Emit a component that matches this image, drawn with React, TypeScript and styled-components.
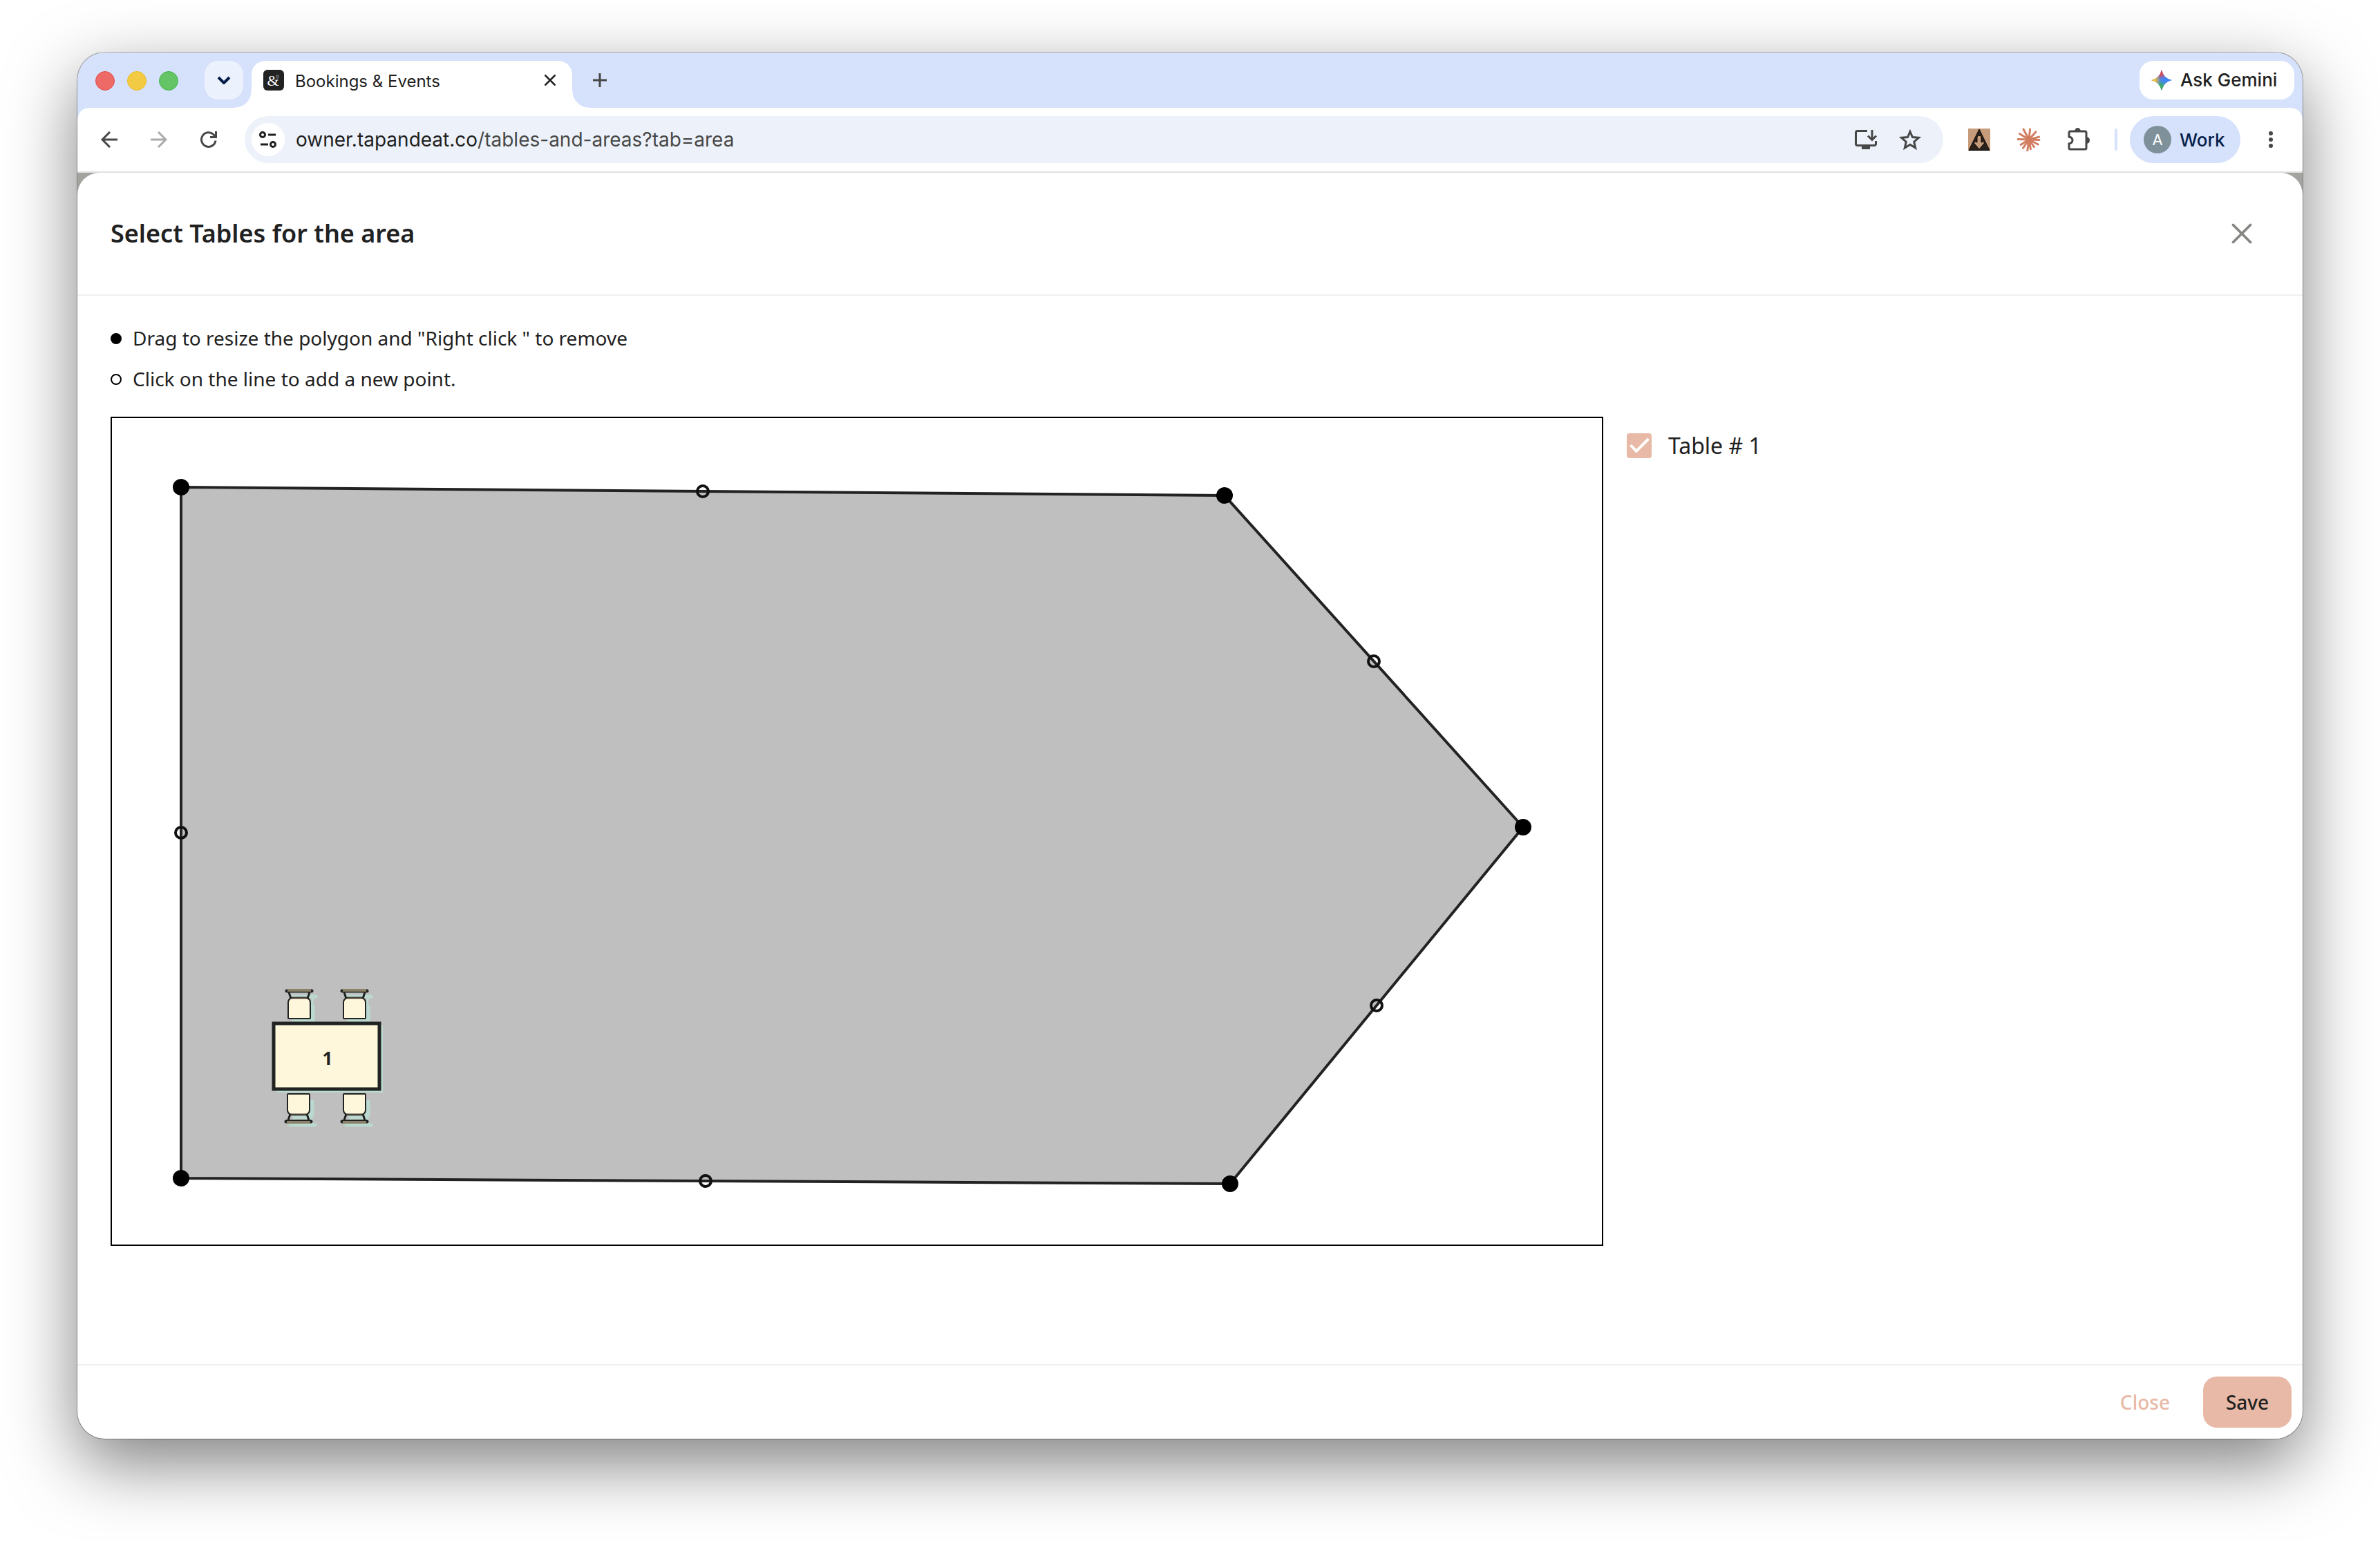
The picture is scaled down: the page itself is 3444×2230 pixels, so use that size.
import React, { useState } from "react";
import styled, { createGlobalStyle } from "styled-components";

const ui = `Inter, "Liberation Sans", sans-serif`;
const body = `"Noto Sans", "Open Sans", sans-serif`;
const peach = "#e8b9a6";

const GlobalStyle = createGlobalStyle`
  *, *::before, *::after { box-sizing: border-box; }
  html, body { margin: 0; background: #fff; }
  button { border: 0; background: none; padding: 0; margin: 0; font: inherit; color: inherit; cursor: pointer; }
  svg { display: block; flex: none; }
`;

const Desktop = styled.main`
  min-height: 100vh;
  display: flex;
  padding: 76px 112px 148px;
  background: #fff;
`;

const Window = styled.div`
  flex: 1;
  min-width: 0;
  display: flex;
  flex-direction: column;
  border-radius: 40px;
  overflow: hidden;
  background: #a3a3a0;
  box-shadow: 0 0 0 1px rgba(0, 0, 0, 0.32), 0 36px 100px rgba(0, 0, 0, 0.5);
`;

const TabStrip = styled.header`
  height: 80px;
  flex: none;
  display: flex;
  align-items: flex-start;
  padding: 12px 12px 0 26px;
  background: #d6e1fb;
  box-shadow: inset 0 1px 0 #eaf0fd;
  font-family: ${ui};
`;

const Lights = styled.div`
  display: flex;
  gap: 18px;
  padding-top: 15px;
`;

const Light = styled.span<{ $fill: string; $edge: string }>`
  width: 28px;
  height: 28px;
  border-radius: 50%;
  background: ${(p) => p.$fill};
  border: 1px solid ${(p) => p.$edge};
`;

const TabSearch = styled.button`
  width: 56px;
  height: 56px;
  margin-left: 38px;
  border-radius: 20px;
  background: #ebf2fd;
  display: grid;
  place-items: center;
`;

const Tab = styled.div`
  position: relative;
  width: 464px;
  height: 68px;
  margin-left: 12px;
  padding: 0 20px 12px 17px;
  display: flex;
  align-items: center;
  background: #fff;
  border-radius: 20px 20px 0 0;
  font-size: 24px;
  color: #1f1f1f;

  &::before,
  &::after {
    content: "";
    position: absolute;
    bottom: 0;
    width: 24px;
    height: 24px;
  }
  &::before {
    right: 100%;
    background: radial-gradient(circle at 0 0, transparent 23px, #fff 24px);
  }
  &::after {
    left: 100%;
    background: radial-gradient(circle at 100% 0, transparent 23px, #fff 24px);
  }
`;

const TabTitle = styled.span`
  flex: 1;
  margin-left: 16px;
  padding-top: 2px;
`;

const IconButton = styled.button<{ $size?: number }>`
  width: ${(p) => p.$size ?? 56}px;
  height: ${(p) => p.$size ?? 56}px;
  flex: none;
  display: grid;
  place-items: center;
`;

const NewTab = styled(IconButton)`
  margin-left: 12px;
`;

const GeminiButton = styled.button`
  width: 224px;
  height: 56px;
  margin-left: auto;
  padding: 0 0 0 17px;
  display: flex;
  align-items: center;
  gap: 12px;
  border-radius: 20px;
  background: #fff;
  color: #1f1f1f;
  font-size: 26px;
  font-weight: 500;
  line-height: 32px;
  white-space: nowrap;
`;

const Toolbar = styled.nav`
  height: 94px;
  flex: none;
  position: relative;
  display: flex;
  align-items: center;
  padding: 0 22px 0 18px;
  background: #fff;
  border-bottom: 2px solid #e0e0e0;
  font-family: ${ui};
  color: #474747;

  &::before,
  &::after {
    content: "";
    position: absolute;
    top: 0;
    width: 16px;
    height: 16px;
  }
  &::before {
    left: 0;
    background: radial-gradient(circle at 100% 100%, transparent 15px, #d6e1fb 16px);
  }
  &::after {
    right: 0;
    background: radial-gradient(circle at 0 100%, transparent 15px, #d6e1fb 16px);
  }
`;

const NavButtons = styled.div`
  display: flex;
  gap: 16px;
`;

const AddressBar = styled.div`
  flex: 1;
  min-width: 0;
  height: 68px;
  margin-left: 24px;
  padding: 0 20px 0 10px;
  display: flex;
  align-items: center;
  gap: 8px;
  border-radius: 34px;
  background: #edf2fa;
`;

const SiteInfo = styled(IconButton)`
  border-radius: 50%;
  background: #fff;
  width: 48px;
  height: 48px;
`;

const Url = styled.a`
  flex: 1;
  margin-left: 8px;
  font-size: 28px;
  line-height: 36px;
  color: #474747;
  text-decoration: none;
  b { font-weight: 400; color: #1f1f1f; }
`;

const Extensions = styled.div`
  display: flex;
  align-items: center;
  gap: 24px;
  margin-left: 28px;
`;

const Divider = styled.span`
  width: 4px;
  height: 32px;
  margin: 0 18px 0 28px;
  border-radius: 2px;
  background: #d6e1fb;
`;

const Profile = styled.button`
  width: 160px;
  height: 68px;
  padding: 0 0 0 20px;
  display: flex;
  align-items: center;
  gap: 12px;
  border-radius: 34px;
  background: #d6e1fb;
  color: #041e49;
  font-size: 26px;
  font-weight: 500;
`;

const Avatar = styled.span`
  width: 40px;
  height: 40px;
  border-radius: 50%;
  display: grid;
  place-items: center;
  background: #7e919b;
  color: #fff;
  font-size: 22px;
  font-weight: 400;
`;

const MenuButton = styled(IconButton)`
  margin-left: 20px;
  width: 48px;
`;

const Dialog = styled.section`
  flex: 1;
  display: flex;
  flex-direction: column;
  border-radius: 32px 32px 0 0;
  background: #fff;
  font-family: ${body};
  color: #212121;
`;

const DialogHeader = styled.header`
  height: 178px;
  display: flex;
  align-items: center;
  justify-content: space-between;
  padding: 0 60px 0 48px;
  border-bottom: 2px solid #f0f0f0;
`;

const Title = styled.h1`
  margin: 0;
  font-size: 36px;
  line-height: 48px;
  font-weight: 600;
`;

const Content = styled.div`
  flex: 1;
  padding: 32px 48px 0;
`;

const Hints = styled.ul`
  margin: 0 0 25px;
  padding: 0;
  list-style: none;
`;

const Hint = styled.li`
  display: flex;
  align-items: center;
  gap: 16px;
  height: 59px;
  font-size: 28px;
  line-height: 41px;
`;

const Dot = styled.span<{ $filled?: boolean }>`
  width: 16px;
  height: 16px;
  border-radius: 50%;
  border: 2px solid #000;
  background: ${(p) => (p.$filled ? "#000" : "transparent")};
`;

const Workspace = styled.div`
  display: grid;
  grid-template-columns: minmax(0, 2160fr) minmax(0, 932fr);
  gap: 32px;
  align-items: start;
`;

const Plan = styled.div`
  border: 2px solid #000;
  svg { width: 100%; height: auto; }
`;

const TableOption = styled.label`
  display: flex;
  align-items: center;
  gap: 24px;
  padding: 18px 2px 0;
  font-size: 32px;
  line-height: 48px;
`;

const Check = styled.input`
  appearance: none;
  width: 36px;
  height: 36px;
  margin: 0;
  border-radius: 4px;
  border: 3px solid ${peach};
  display: grid;
  place-items: center;

  &:checked { background: ${peach}; }
  &:checked::after {
    content: "";
    width: 27px;
    height: 14px;
    border: solid #fff;
    border-width: 0 0 4px 4px;
    transform: translateY(-4px) rotate(-45deg);
  }
`;

const DialogFooter = styled.footer`
  height: 108px;
  display: flex;
  align-items: center;
  justify-content: flex-end;
  gap: 16px;
  padding: 0 16px;
  border-top: 2px solid #f0f0f0;
`;

const ActionButton = styled.button<{ $primary?: boolean }>`
  min-width: 128px;
  height: 74px;
  padding: 0 32px;
  border-radius: 20px;
  font-size: 28px;
  font-weight: 500;
  color: ${(p) => (p.$primary ? "#212121" : peach)};
  background: ${(p) => (p.$primary ? peach : "transparent")};
`;

const corners = [[100, 100], [1610, 112], [2042, 592], [1618, 1108], [100, 1100]];

function Chair({ x, y, flip }: { x: number; y: number; flip?: boolean }) {
  return (
    <g transform={`translate(${x} ${y})${flip ? " scale(1 -1)" : ""}`}>
      <g fill="#bad9cf" stroke="#bad9cf" strokeWidth="3" transform={flip ? "translate(6 -5)" : "translate(6 8)"}>
        <path d="M-18 3H18" strokeWidth="5" strokeLinecap="round" />
        <path d="M-14 5L-12 14M14 5L12 14" />
        <path d="M-15 38V20Q-15 14 -10 13H10Q15 14 15 20V38Z" />
      </g>
      <path d="M-15 5L-12 14M15 5L12 14" stroke="#212322" strokeWidth="3" />
      <path d="M-16 42V20Q-16 14 -10 13H10Q16 14 16 20V42Q16 43 15 43H-15Q-16 43 -16 42Z" fill="#fef7dc" stroke="#212322" strokeWidth="2" />
      <path d="M-11 13H11" stroke="#4a423b" strokeWidth="3" />
      <path d="M-18 3H18" stroke="#212322" strokeWidth="5" strokeLinecap="round" />
      <path d="M-17 2H17" stroke="#8a8168" strokeWidth="4" />
    </g>
  );
}

function FloorPlan() {
  return (
    <svg viewBox="0 0 2156 1196" role="img" aria-label="Area polygon">
      <polygon points={corners.map((c) => c.join(",")).join(" ")} fill="#bfbfbf" stroke="#222" strokeWidth="4" />
      {corners.map(([x, y], i) => {
        const [nx, ny] = corners[(i + 1) % corners.length];
        return <circle key={i} cx={(x + nx) / 2} cy={(y + ny) / 2} r="8" fill="none" stroke="#111" strokeWidth="4" />;
      })}
      {corners.map(([x, y], i) => <circle key={i} cx={x} cy={y} r="12" fill="#000" />)}
      <Chair x={271} y={826} />
      <Chair x={351} y={826} />
      <Chair x={270} y={1021} flip />
      <Chair x={351} y={1021} flip />
      <path d="M239 879H392V976H239Z" fill="#bad9cf" />
      <rect x="234" y="876" width="153" height="95" fill="#fef7dc" stroke="#212322" strokeWidth="5" />
      <text x="312" y="936" textAnchor="middle" fontFamily="Noto Sans, sans-serif" fontSize="26" fontWeight="700" fill="#212121">1</text>
    </svg>
  );
}

const Cross = ({ size, width, color }: { size: number; width: number; color: string }) => (
  <svg width={size} height={size} viewBox="0 0 24 24" fill="none" stroke={color} strokeWidth={width} strokeLinecap="round">
    <path d="M2 2L22 22M22 2L2 22" />
  </svg>
);

const Favicon = () => (
  <svg width="30" height="30" viewBox="0 0 30 30">
    <rect width="30" height="30" rx="6" fill="#222" />
    <text x="14" y="23" textAnchor="middle" fontFamily="Liberation Serif, serif" fontSize="22" fill="#fff">&amp;</text>
    <path d="M19 8H22V11H19ZM19 13H22" fill="none" stroke="#8a8a8a" strokeWidth="1" />
  </svg>
);

const Spark = () => (
  <svg width="30" height="30" viewBox="0 0 32 32">
    <defs>
      <radialGradient id="sparkRed" gradientUnits="userSpaceOnUse" cx="14" cy="3" r="12">
        <stop offset="0.3" stopColor="#e5484a" /><stop offset="1" stopColor="#e5484a" stopOpacity="0" />
      </radialGradient>
      <radialGradient id="sparkYellow" gradientUnits="userSpaceOnUse" cx="2" cy="16" r="13">
        <stop offset="0.3" stopColor="#f6c02c" /><stop offset="1" stopColor="#f6c02c" stopOpacity="0" />
      </radialGradient>
      <radialGradient id="sparkGreen" gradientUnits="userSpaceOnUse" cx="14" cy="29" r="13">
        <stop offset="0.3" stopColor="#3fae5a" /><stop offset="1" stopColor="#3fae5a" stopOpacity="0" />
      </radialGradient>
    </defs>
    {["#4285f4", "url(#sparkGreen)", "url(#sparkRed)", "url(#sparkYellow)"].map((f) => (
      <path key={f} fill={f} d="M16 0Q19 13 32 16Q19 19 16 32Q13 19 0 16Q13 13 16 0Z" />
    ))}
  </svg>
);

const rays = [[2, 15], [28, 15], [55, 13], [80, 14], [98, 16], [125, 15], [148, 14], [182, 16], [212, 16], [242, 17], [276, 15], [312, 15], [345, 15]];

const Burst = () => (
  <svg width="34" height="34" viewBox="-17 -17 34 34" stroke="#d27d60" strokeWidth="3" strokeLinecap="round">
    {rays.map(([angle, length]) => (
      <path key={angle} d={`M0 0H${length}`} transform={`rotate(${angle})`} />
    ))}
  </svg>
);

export default function App() {
  const [checked, setChecked] = useState(true);
  return (
    <>
      <GlobalStyle />
      <Desktop>
        <Window>
          <TabStrip>
            <Lights>
              <Light $fill="#ee6a66" $edge="#e04f4c" />
              <Light $fill="#f3ca44" $edge="#e9bb25" />
              <Light $fill="#65c466" $edge="#42b549" />
            </Lights>
            <TabSearch aria-label="Search tabs">
              <svg width="20" height="12" viewBox="0 0 20 12" fill="none" stroke="#041e49" strokeWidth="4"><path d="M2 2L10 10L18 2" /></svg>
            </TabSearch>
            <Tab>
              <Favicon />
              <TabTitle>Bookings &amp; Events</TabTitle>
              <IconButton $size={24} aria-label="Close tab"><Cross size={16} width={4} color="#1f1f1f" /></IconButton>
            </Tab>
            <NewTab aria-label="New tab">
              <svg width="20" height="20" viewBox="0 0 20 20" stroke="#474747" strokeWidth="3"><path d="M10 0V20M0 10H20" /></svg>
            </NewTab>
            <GeminiButton><Spark />Ask Gemini</GeminiButton>
          </TabStrip>

          <Toolbar>
            <NavButtons>
              <IconButton aria-label="Back">
                <svg width="24" height="24" viewBox="0 0 24 24" fill="none" stroke="#474747" strokeWidth="3"><path d="M24 12H2M13 1L2 12L13 23" /></svg>
              </IconButton>
              <IconButton aria-label="Forward">
                <svg width="24" height="24" viewBox="0 0 24 24" fill="none" stroke="#ababab" strokeWidth="3"><path d="M0 12H22M11 1L22 12L11 23" /></svg>
              </IconButton>
              <IconButton aria-label="Reload">
                <svg width="24" height="24" viewBox="0 0 24 24" fill="none" stroke="#474747" strokeWidth="3"><path d="M22 13.500A10.300 10.300 0 1 1 18.800 4.500L22 8M22.500 0V8.500H14" /></svg>
              </IconButton>
            </NavButtons>
            <AddressBar>
              <SiteInfo aria-label="Site information">
                <svg width="26" height="24" viewBox="0 0 26 24" fill="none" stroke="#1f1f1f" strokeWidth="3"><circle cx="5" cy="5" r="3.500" /><path d="M13 5H24M2 19H13" /><circle cx="20" cy="19" r="3.500" /></svg>
              </SiteInfo>
              <Url href="#"><b>owner.tapandeat.co</b>/tables-and-areas?tab=area</Url>
              <IconButton aria-label="Install app">
                <svg width="32" height="28" viewBox="0 0 32 28" fill="none" stroke="#474747" strokeWidth="3"><path d="M18 1.500H4Q1.500 1.500 1.500 4V20Q1.500 22.500 4 22.500H28Q30.500 22.500 30.500 20V16M25 0V14M19 8.500L25 14.500L31 8.500" /><path d="M10 25.500H22" strokeWidth="5" /></svg>
              </IconButton>
              <IconButton aria-label="Bookmark this page">
                <svg width="32" height="30" viewBox="0 0 32 30" fill="none" stroke="#474747" strokeWidth="3"><path d="M16 3.500L19.500 11.500L28.500 12.300L21.700 18.200L23.700 27L16 22.300L8.300 27L10.300 18.200L3.500 12.300L12.500 11.500Z" /></svg>
              </IconButton>
            </AddressBar>
            <Extensions>
              <IconButton $size={48} aria-label="Download extension">
                <svg width="32" height="32" viewBox="0 0 32 32"><path fill="#c69c7b" d="M0 0H32V32H0Z" /><path fill="#2b211b" stroke="#0c0a08" d="M16 1L31 31.500H1Z" /><path d="M13 20V12Q16 8 19 12V20Q21 18 24 20.500L16 30L8 20.500Q11 18 13 20Z" fill="#c69c7b" stroke="#0c0a08" /></svg>
              </IconButton>
              <IconButton $size={48} aria-label="Claude"><Burst /></IconButton>
              <IconButton $size={48} aria-label="Extensions">
                <svg width="34" height="34" viewBox="0 0 34 34" fill="none" stroke="#474747" strokeWidth="3"><path d="M5 5H26Q28 5 28 7V29Q28 31 26 31H5Q3 31 3 29V23Q8 22 8 18Q8 14 3 13V7Q3 5 5 5Z" /><path fill="#474747" stroke="none" d="M11 5Q12 0 15.500 0Q19 0 20 5ZM29 13Q33 14 33 18Q33 22 29 23Z" /></svg>
              </IconButton>
            </Extensions>
            <Divider />
            <Profile><Avatar>A</Avatar>Work</Profile>
            <MenuButton aria-label="Menu">
              <svg width="6" height="24" viewBox="0 0 6 24" fill="#474747"><circle cx="3" cy="3" r="3" /><circle cx="3" cy="12" r="3" /><circle cx="3" cy="21" r="3" /></svg>
            </MenuButton>
          </Toolbar>

          <Dialog role="dialog" aria-labelledby="dialog-title">
            <DialogHeader>
              <Title id="dialog-title">Select Tables for the area</Title>
              <IconButton aria-label="Close dialog"><Cross size={30} width={3} color="#858582" /></IconButton>
            </DialogHeader>
            <Content>
              <Hints>
                <Hint><Dot $filled />Drag to resize the polygon and "Right click " to remove</Hint>
                <Hint><Dot />Click on the line to add a new point.</Hint>
              </Hints>
              <Workspace>
                <Plan><FloorPlan /></Plan>
                <TableOption>
                  <Check type="checkbox" checked={checked} onChange={(e) => setChecked(e.target.checked)} />
                  Table # 1
                </TableOption>
              </Workspace>
            </Content>
            <DialogFooter>
              <ActionButton>Close</ActionButton>
              <ActionButton $primary>Save</ActionButton>
            </DialogFooter>
          </Dialog>
        </Window>
      </Desktop>
    </>
  );
}
